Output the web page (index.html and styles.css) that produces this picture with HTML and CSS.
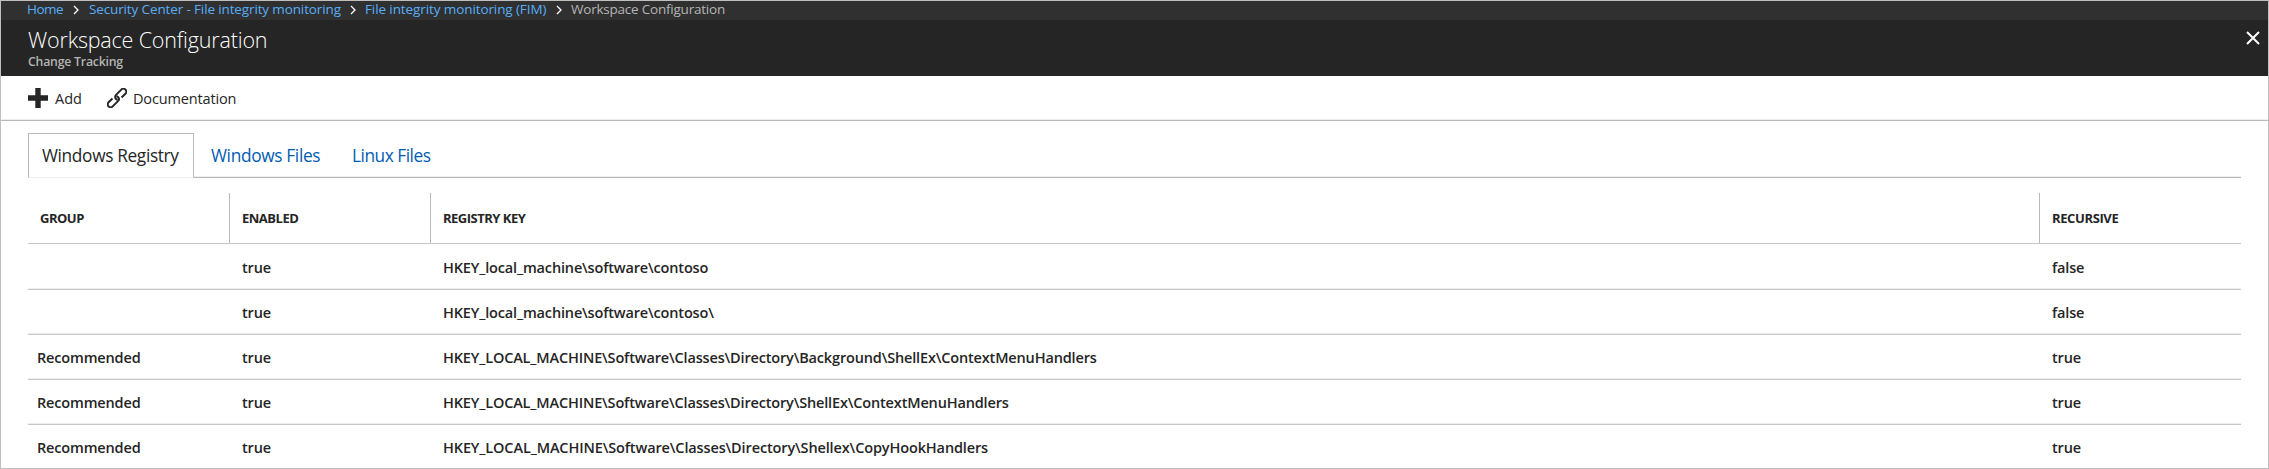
FILE: index.html
```html
<!DOCTYPE html>
<html lang="en">
<head>
<meta charset="utf-8">
<title>Workspace Configuration</title>
<link rel="stylesheet" href="styles.css">
</head>
<body>
<div class="blade">
  <nav class="crumbs">
    <a class="crumb crumb-home">Home</a>
    <svg class="sep" viewBox="0 0 6 10"><path d="M1 1l4 4-4 4"/></svg>
    <a class="crumb">Security Center - File integrity monitoring</a>
    <svg class="sep" viewBox="0 0 6 10"><path d="M1 1l4 4-4 4"/></svg>
    <a class="crumb crumb-fim">File integrity monitoring (FIM)</a>
    <svg class="sep" viewBox="0 0 6 10"><path d="M1 1l4 4-4 4"/></svg>
    <span class="crumb crumb-current">Workspace Configuration</span>
  </nav>
  <header class="header">
    <div>
      <h1 class="title">Workspace Configuration</h1>
      <p class="subtitle">Change Tracking</p>
    </div>
    <svg class="close" viewBox="0 0 14 14"><path d="M1 1l12 12M13 1L1 13"/></svg>
  </header>
  <div class="toolbar">
    <svg class="icon" viewBox="0 0 20 20"><path fill="#252525" d="M7.300 0h5.400v7.300H20v5.400h-7.300V20H7.300v-7.300H0V7.300h7.300z"/></svg>
    <span class="cmd cmd-add">Add</span>
    <svg class="icon" viewBox="0 0 20 20"><g class="link" transform="rotate(-45 10 10)"><path d="M6.500 7.100H1a2.900 2.900 0 0 0 0 5.800H8.500a2.900 2.900 0 0 0 2.900-2.900q0-1-.6-1.700"/><path d="M13.500 12.900H19a2.900 2.900 0 0 0 0-5.800H11.500a2.900 2.900 0 0 0-2.900 2.900q0 1 .6 1.700"/></g></svg>
    <span class="cmd cmd-doc">Documentation</span>
  </div>
  <main class="content">
    <div class="tabs">
      <div class="tab tab-active">Windows Registry</div>
      <div class="tab tab-files">Windows Files</div>
      <div class="tab tab-linux">Linux Files</div>
    </div>
    <div class="grid">
      <div class="row head">
        <div class="cell group">GROUP</div><div class="cell enabled">ENABLED</div><div class="cell key">REGISTRY KEY</div><div class="cell recursive">RECURSIVE</div>
      </div>
      <div class="row"><div class="cell group"></div><div class="cell">true</div><div class="cell">HKEY_local_machine\software\contoso</div><div class="cell">false</div></div>
      <div class="row"><div class="cell group"></div><div class="cell">true</div><div class="cell">HKEY_local_machine\software\contoso\</div><div class="cell">false</div></div>
      <div class="row"><div class="cell group">Recommended</div><div class="cell">true</div><div class="cell">HKEY_LOCAL_MACHINE\Software\Classes\Directory\Background\ShellEx\ContextMenuHandlers</div><div class="cell">true</div></div>
      <div class="row"><div class="cell group">Recommended</div><div class="cell">true</div><div class="cell">HKEY_LOCAL_MACHINE\Software\Classes\Directory\ShellEx\ContextMenuHandlers</div><div class="cell">true</div></div>
      <div class="row"><div class="cell group">Recommended</div><div class="cell">true</div><div class="cell key-hook">HKEY_LOCAL_MACHINE\Software\Classes\Directory\Shellex\CopyHookHandlers</div><div class="cell">true</div></div>
    </div>
  </main>
</div>
</body>
</html>
```
FILE: styles.css
```css
* { box-sizing: border-box; }
body {
  margin: 0;
  background: #fff;
  color: #252525;
  font-family: "Open Sans", "Noto Sans", sans-serif;
}
.blade {
  height: 469px;
  overflow: hidden;
  border: 1px solid #bfbfbf;
}
.crumbs {
  display: flex;
  align-items: center;
  height: 19px;
  padding: 0 0 2px 26px;
  background: #303030;
  font-size: 13.5px;
  line-height: 17px;
  white-space: nowrap;
}
.crumb { width: 252px; color: #57aef7; letter-spacing: -0.13px; }
.crumb-home { width: 37px; letter-spacing: -0.5px; }
.crumb-fim { width: 182px; letter-spacing: -0.1px; }
.crumb-current { width: auto; color: #b4b4b4; letter-spacing: -0.22px; }
.sep {
  width: 6px;
  height: 10px;
  margin: 1px 9px 0 9px;
  fill: none;
  stroke: #fff;
  stroke-width: 1.3;
}
.crumb-home + .sep { margin-right: 10px; }
.header {
  display: flex;
  justify-content: space-between;
  height: 56px;
  padding: 5px 8px 0 27px;
  background: #252525;
}
.title {
  margin: 0;
  color: #fff;
  font-size: 21.5px;
  font-weight: 300;
  line-height: 30px;
  letter-spacing: -0.17px;
}
.subtitle {
  margin: 0;
  color: #b4b4b4;
  font-size: 12.3px;
  font-weight: 600;
  line-height: 14px;
  letter-spacing: -0.22px;
}
.close {
  width: 14px;
  height: 14px;
  margin-top: 6px;
  fill: none;
  stroke: #fff;
  stroke-width: 2;
}
.toolbar {
  display: flex;
  align-items: center;
  height: 45px;
  padding: 0 0 1px 27px;
  border-bottom: 1px solid #b9b9b9;
  box-shadow: inset 0 -1px #eee;
  font-size: 14.5px;
  line-height: 20px;
}
.icon { flex: none; width: 20px; height: 20px; }
.link { fill: none; stroke: #252525; stroke-width: 2; }
.cmd-add { width: 59px; padding: 2px 0 0 7px; }
.cmd-doc { padding: 2px 0 0 6px; letter-spacing: -0.15px; }
.content { padding: 12px 27px 0; }
.tabs {
  display: flex;
  height: 45px;
  border-bottom: 1px solid #b9b9b9;
  box-shadow: inset 0 -1px #eee;
  font-size: 17.3px;
  line-height: 45px;
  white-space: nowrap;
}
.tab { color: #015cb3; }
.tab-active {
  width: 166px;
  height: 45px;
  padding-left: 13px;
  background: #fff;
  border: 1px solid #b9b9b9;
  border-bottom-color: #eee;
  color: #252525;
  line-height: 43px;
  letter-spacing: -0.35px;
}
.tab-files { width: 140px; margin-left: 17px; letter-spacing: -0.34px; }
.tab-linux { margin-left: 1px; letter-spacing: -0.48px; }
.grid { padding-top: 15px; }
.row {
  display: grid;
  grid-template-columns: 201px 201px 1609px 1fr;
  height: 45px;
  border-bottom: 1px solid #c6c6c6;
  box-shadow: inset 0 -1px #eee;
  font-size: 14.5px;
  font-weight: 600;
  line-height: 46px;
  letter-spacing: -0.16px;
}
.cell { padding-left: 13px; }
.group { padding-left: 9px; }
.key-hook { letter-spacing: -0.13px; }
.head {
  height: 51px;
  box-shadow: none;
  font-size: 13px;
  font-weight: 700;
  line-height: 50px;
  letter-spacing: -0.5px;
}
.head .cell + .cell { border-left: 1px solid #b9b9b9; padding-left: 12px; }
.head .group { padding-left: 12px; }
.head .recursive { letter-spacing: -0.38px; }
.head + .row { height: 46px; padding-top: 1px; }
```
